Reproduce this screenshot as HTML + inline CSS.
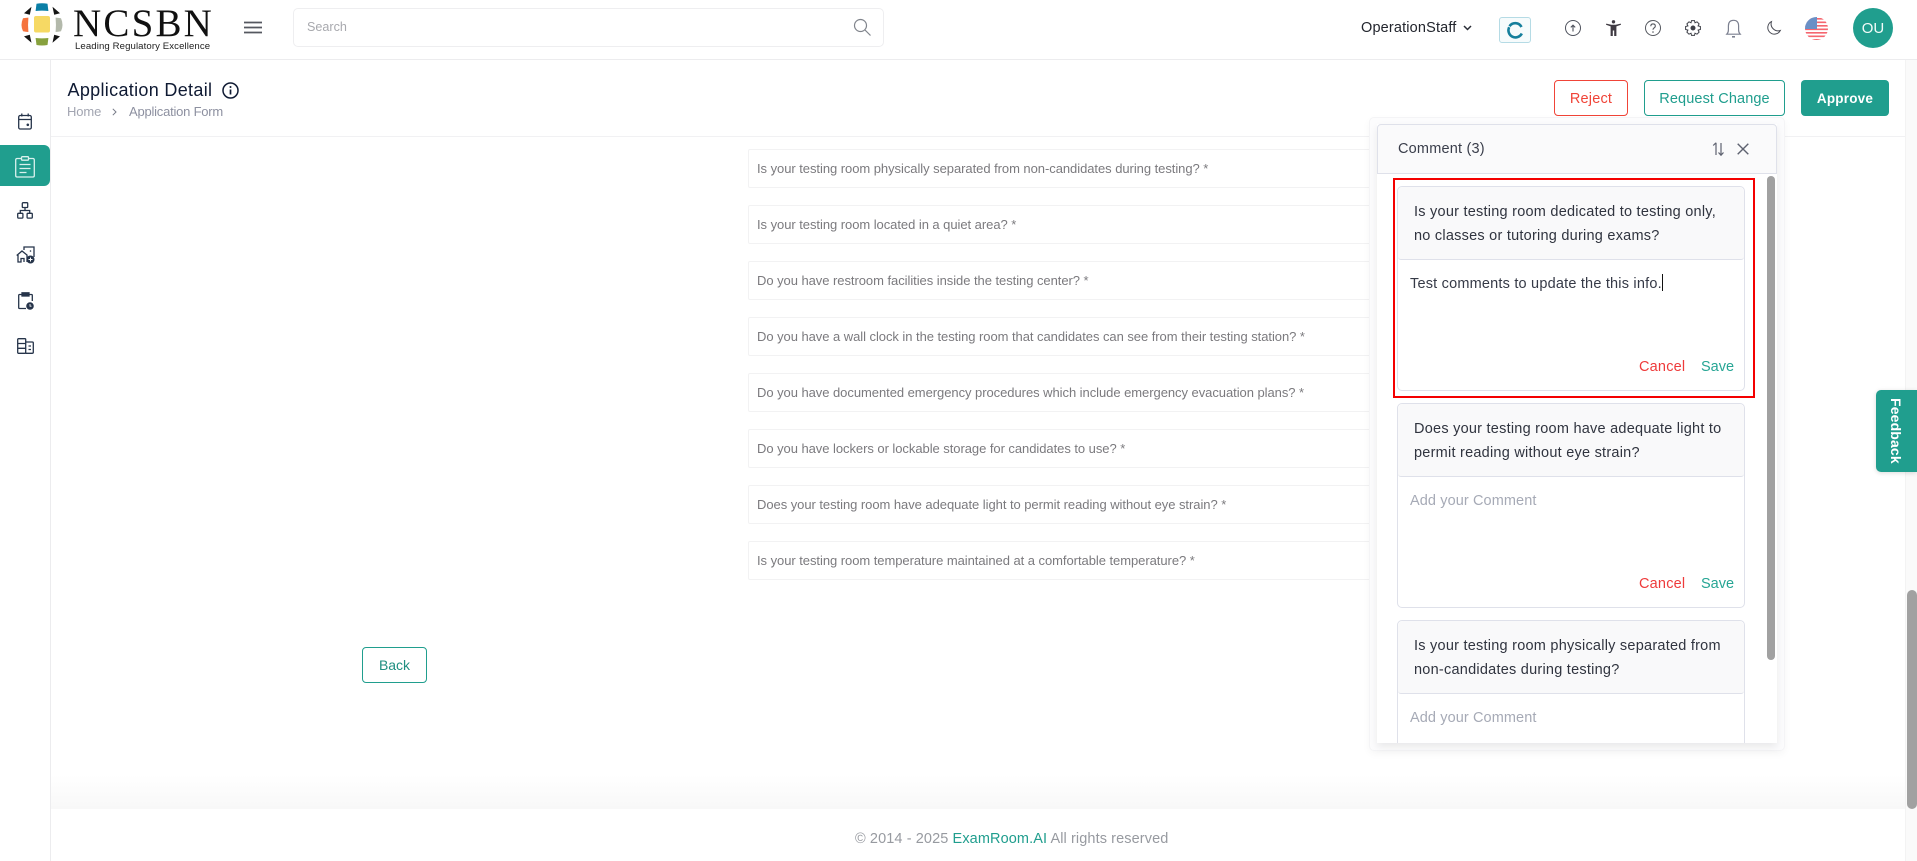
<!DOCTYPE html>
<html lang="en"><head><meta charset="utf-8"><title>Application Detail</title>
<style>
*{box-sizing:border-box}
html,body{margin:0;padding:0;width:1917px;height:861px;overflow:hidden;background:#fff;font-family:"Liberation Sans",sans-serif;color:#2f3442}
.a{position:absolute}
.t{position:absolute;white-space:nowrap;line-height:20px}
.q{position:absolute;left:748px;width:700px;height:39px;border:1px solid #f2f2f3;border-radius:2px;padding-left:8px;line-height:37px;font-size:13px;letter-spacing:-.05px;color:#7b7a7e;white-space:nowrap}
.card{position:absolute;left:1397px;width:348px;background:#fff;border:1px solid #dfe1ea;border-radius:5px}
.ch{position:absolute;left:0;top:0;right:0;height:73px;background:#f9f9fa;border-bottom:1px solid #dfe1ea;border-radius:5px 5px 3px 3px}
.cq{position:absolute;left:16px;white-space:nowrap;font-size:14.5px;line-height:24px;color:#30343f;letter-spacing:.24px}
.ph{position:absolute;left:12px;white-space:nowrap;font-size:14.5px;line-height:20px;color:#a6aab6;letter-spacing:.1px}
.cn{position:absolute;white-space:nowrap;font-size:14.5px;line-height:20px;color:#ee3b3b;letter-spacing:.2px}
.sv{position:absolute;white-space:nowrap;font-size:14.5px;line-height:20px;color:#26a594;letter-spacing:0}
.btn{position:absolute;top:80px;height:36px;border-radius:4px;text-align:center;line-height:36px;font-size:14.5px;letter-spacing:.2px}
svg{position:absolute;display:block;overflow:visible}
</style></head><body>

<!-- main scrollbar track -->
<div class="a" style="left:1905px;top:60px;width:12px;height:801px;background:#fafafa;border-left:1px solid #f3f3f3"></div>
<div class="a" style="left:1907px;top:590px;width:10px;height:219px;background:#a1a1a1;border-radius:5px"></div>

<!-- header -->
<div class="a" style="left:0;top:0;width:1917px;height:60px;background:#fff;border-bottom:1px solid #ececee"></div>
<svg style="left:0;top:0" width="70" height="50" viewBox="0 0 70 50">
<path d="M36.500 3.800Q42 2.800 47.500 3.800L48.400 11Q42 10.200 35.600 11Z" fill="#0b7fa6"/>
<path d="M23 18.200Q26 17.800 28.400 17.600Q27.700 25 28.400 32Q25.600 31.800 23 31.200Q20 25 23 18.200Z" fill="#f5733d"/>
<rect x="34" y="16" width="16" height="16.500" rx="2" fill="#f6d964"/>
<path d="M55.600 17.600Q58 17.800 61 18.200Q64 25 61 31.200Q58 31.800 55.600 32Q56.300 25 55.600 17.600Z" fill="#b3b9ab"/>
<path d="M35.600 38Q42 38.800 48.400 38L47.500 45Q42 46 36.500 45Z" fill="#87a13e"/>
<path d="M31.500 6.800L24 13.200L29.800 14.800ZM52.500 6.800L60 13.200L54.200 14.800ZM31.500 42.800L24 36.400L29.800 34.800ZM52.500 42.800L60 36.400L54.200 34.800Z" fill="#151515"/>
</svg>
<div class="t" style="left:73px;top:3px;font:39px/42px 'Liberation Serif',serif;letter-spacing:2.2px;color:#111">NCSBN</div>
<div class="t" style="left:75px;top:38px;font-size:9.600px;line-height:18px;color:#222;letter-spacing:.1px">Leading Regulatory Excellence</div>
<svg style="left:244px;top:21px" width="18" height="13"><path d="M0 1.500H18M0 6.500H18M0 11.500H18" stroke="#555860" stroke-width="1.700"/></svg>
<div class="a" style="left:293px;top:8px;width:591px;height:39px;border:1px solid #eeeef0;border-radius:5px"></div>
<div class="t" style="left:307px;top:17px;font-size:12.600px;color:#a8a9ae">Search</div>
<svg style="left:853px;top:18px" width="18" height="18" viewBox="0 0 18 18" fill="none" stroke="#80848c" stroke-width="1.200"><circle cx="7.500" cy="7.500" r="6"/><path d="M12 12L17.500 17.500"/></svg>

<div class="t" style="left:1361px;top:18px;font-size:14.500px;color:#22252d;letter-spacing:.16px">OperationStaff</div>
<svg style="left:1463px;top:25px" width="9" height="6" fill="none" stroke="#2a2d36" stroke-width="1.500"><path d="M1 1L4.500 4.500L8 1"/></svg>
<div class="a" style="left:1499px;top:17px;width:32px;height:26px;border:1px solid #b5dbe5;border-radius:3px;background:#f6fbfc"></div>
<svg style="left:1507px;top:22px" width="17" height="17" viewBox="0 0 17 17" fill="none" stroke="#157f9c" stroke-width="2.600"><path d="M14.500 5A7 7 0 0 0 2.500 4.200"/><path d="M2.200 5.200A7 7 0 0 0 14.800 11.500"/></svg>

<!-- header icons -->
<svg style="left:1565px;top:20px" width="16" height="16" viewBox="0 0 16 16" fill="none" stroke="#4e525d" stroke-width="1"><circle cx="8" cy="8" r="7.500"/><path d="M8 11.500V5.200M5.800 7.400L8 5.200L10.200 7.400" stroke-width="1.100"/></svg>
<svg style="left:1606px;top:20px" width="15" height="16" viewBox="0 0 15 16"><circle cx="7.500" cy="1.800" r="1.700" fill="#3f3a42"/><path d="M.3 3.600L5.300 4.700H9.700L14.700 3.600L15 4.700L10.400 6.400V16H8.200V10.500H6.800V16H4.600V6.400L0 4.700Z" fill="#3f3a42"/></svg>
<svg style="left:1645px;top:20px" width="16" height="16" viewBox="0 0 16 16" fill="none" stroke="#55585f" stroke-width="1"><circle cx="8" cy="8" r="7.500"/><path d="M5.800 6.200Q5.800 3.900 8 3.900Q10.300 3.900 10.300 6Q10.300 7.300 9 8Q8 8.600 8 9.800" stroke-width="1.100"/><circle cx="8" cy="12" r=".8" fill="#55585f" stroke="none"/></svg>
<svg style="left:1685px;top:20px" width="16" height="16" viewBox="0 0 16 16" fill="none" stroke="#3e4048" stroke-width="1"><path d="M6.500 .600H9.500L10 2.800L12 1.800L14.100 3.900L13.100 5.900L15.400 6.500V9.500L13.100 10.100L14.100 12.100L12 14.200L10 13.200L9.500 15.400H6.500L6 13.200L4 14.200L1.900 12.100L2.900 10.100L.600 9.500V6.500L2.900 5.900L1.900 3.900L4 1.800L6 2.800Z"/><circle cx="8" cy="8" r="2" fill="#3e4048"/></svg>
<svg style="left:1726px;top:19px" width="15" height="19" viewBox="0 0 15 19" fill="none" stroke="#7c8090" stroke-width="1.200"><path d="M.8 15.200H14.200Q12.600 13.500 12.600 11V7Q12.600 1.300 7.500 1.300Q2.400 1.300 2.400 7V11Q2.400 13.500 .8 15.200Z"/><path d="M6 17.800H9" stroke-width="1.600"/></svg>
<svg style="left:1766px;top:21px" width="15" height="14" viewBox="0 0 15 14" fill="none" stroke="#4a4c55" stroke-width="1"><path d="M5.500 .6A6.600 6.600 0 1 0 14.300 9.500A7 7 0 0 1 5.500 .6Z"/></svg>
<svg style="left:1805px;top:17px" width="23" height="23" viewBox="0 0 23 23"><defs><clipPath id="fc"><circle cx="11.500" cy="11.500" r="11.500"/></clipPath></defs><g clip-path="url(#fc)"><rect width="23" height="23" fill="#fff"/><path d="M0 1.800H23M0 5.300H23M0 8.800H23M0 12.300H23M0 15.800H23M0 19.300H23M0 22.800H23" stroke="#f5666f" stroke-width="1.700"/><rect width="12" height="12" fill="#6a90c6"/></g></svg>
<div class="a" style="left:1853px;top:8px;width:40px;height:40px;border-radius:50%;background:#209e8e;color:#f3fbf9;text-align:center;line-height:42px;font-size:15px">OU</div>

<!-- sidebar -->
<div class="a" style="left:50px;top:60px;width:1px;height:801px;background:#ececee"></div>
<div class="a" style="left:0;top:145px;width:50px;height:41px;background:#209e8e;border-radius:0 6px 6px 0"></div>
<svg style="left:18px;top:113px" width="14" height="17" viewBox="0 0 14 17" fill="none" stroke="#26344a" stroke-width="1.300"><rect x=".7" y="2.500" width="12.600" height="13.500" rx="1.500"/><path d="M.7 6.500H13.300M3.800 .5V3.500M10.200 .5V3.500"/><circle cx="9.800" cy="11.800" r="1.300" fill="#26344a" stroke="none"/></svg>
<svg style="left:15px;top:156px" width="20" height="22" viewBox="0 0 20 22" fill="none" stroke="#d9f1ed" stroke-width="1.300"><path d="M6.500 2.500H2Q.7 2.500 .7 4V19.500Q.7 21 2 21H18Q19.300 21 19.300 19.500V4Q19.300 2.500 18 2.500H13.500"/><rect x="6.500" y=".7" width="7" height="3.500" rx=".8"/><path d="M4.500 8.500H15.500M4.500 12.500H15.500M4.500 16.500H11.500"/></svg>
<svg style="left:17px;top:202px" width="16" height="17" viewBox="0 0 16 17" fill="none" stroke="#26344a" stroke-width="1.300"><rect x="5.300" y=".7" width="5.400" height="4.800" rx=".8"/><rect x=".7" y="11.300" width="5.200" height="4.800" rx=".8"/><rect x="10.100" y="11.300" width="5.200" height="4.800" rx=".8"/><path d="M8 5.500V8.500M3.300 11.300V8.500H12.700V11.300"/></svg>
<svg style="left:16px;top:246px" width="19" height="18" viewBox="0 0 19 18" fill="none" stroke="#26344a" stroke-width="1.300"><path d="M.7 9.500L6 5L11 9V16M2 9V16H5V12.500H8V16"/><path d="M8 4V1H18V11"/><circle cx="14.500" cy="13.500" r="4" fill="#26344a" stroke="none"/><path d="M12.500 13.500H16.500M14.500 11.500V15.500" stroke="#fff" stroke-width="1"/><circle cx="14.500" cy="5" r=".8" fill="#26344a" stroke="none"/></svg>
<svg style="left:18px;top:292px" width="16" height="18" viewBox="0 0 16 18" fill="none" stroke="#26344a" stroke-width="1.300"><path d="M4 2.500H1.500Q.7 2.500 .7 3.500V15.500Q.7 16.500 1.500 16.500H8M11 2.500H13.500Q14.300 2.500 14.300 3.500V9"/><rect x="4" y=".8" width="7" height="3.200" fill="#26344a"/><circle cx="12" cy="14" r="3.800" fill="#26344a" stroke="none"/><path d="M12 12V14.200H13.500" stroke="#fff" stroke-width=".8"/></svg>
<svg style="left:17px;top:338px" width="17" height="16" viewBox="0 0 17 16" fill="none" stroke="#26344a" stroke-width="1.300"><rect x=".7" y=".7" width="8" height="14.600" rx=".8"/><path d="M.7 5.500H8.700M.7 10.300H8.700M8.700 4H15.300Q16.300 4 16.300 5V14.300Q16.300 15.300 15.300 15.300H8.700M11.500 8H14M11.500 11.500H14"/></svg>

<!-- page header -->
<div class="a" style="left:51px;top:136px;width:1854px;height:1px;background:#f1f1f3"></div>
<div class="t" style="left:67.500px;top:79px;font-size:18px;line-height:22px;color:#0f1a33;letter-spacing:.32px">Application Detail</div>
<svg style="left:222px;top:82px" width="17" height="17" viewBox="0 0 17 17" fill="none" stroke="#0f1a33" stroke-width="1.500"><circle cx="8.500" cy="8.500" r="7.500"/><path d="M8.500 7.500V12.500" stroke-width="1.700"/><circle cx="8.500" cy="5" r="1" fill="#0f1a33" stroke="none"/></svg>
<div class="t" style="left:67px;top:102px;font-size:13px;color:#a2a5b1;letter-spacing:-.1px">Home</div>
<svg style="left:112px;top:108px" width="5" height="8" fill="none" stroke="#777b88" stroke-width="1"><path d="M.8 .8L4 4L.8 7.200"/></svg>
<div class="t" style="left:129px;top:102px;font-size:13px;color:#8d90a0;letter-spacing:-.22px">Application Form</div>

<div class="btn" style="left:1554px;width:74px;border:1px solid #f04438;color:#f04438;line-height:37px">Reject</div>
<div class="btn" style="left:1644px;width:141px;border:1px solid #209e8e;color:#209e8e;line-height:37px;letter-spacing:.12px">Request Change</div>
<div class="btn" style="left:1801px;width:88px;background:#209e8e;color:#fff;font-weight:bold;line-height:38px;font-size:13.500px">Approve</div>

<!-- questions -->
<div class="q" style="top:149px">Is your testing room physically separated from non-candidates during testing? *</div>
<div class="q" style="top:205px">Is your testing room located in a quiet area? *</div>
<div class="q" style="top:261px">Do you have restroom facilities inside the testing center? *</div>
<div class="q" style="top:317px">Do you have a wall clock in the testing room that candidates can see from their testing station? *</div>
<div class="q" style="top:373px">Do you have documented emergency procedures which include emergency evacuation plans? *</div>
<div class="q" style="top:429px">Do you have lockers or lockable storage for candidates to use? *</div>
<div class="q" style="top:485px">Does your testing room have adequate light to permit reading without eye strain? *</div>
<div class="q" style="top:541px">Is your testing room temperature maintained at a comfortable temperature? *</div>

<div class="a" style="left:362px;top:647px;width:65px;height:36px;border:1px solid #209e8e;border-radius:4px;text-align:center;line-height:34px;font-size:14px;color:#1f8f81">Back</div>

<!-- footer -->
<div class="a" style="left:51px;top:775px;width:1854px;height:34px;background:linear-gradient(to bottom,#fff 0%,#f8f8f8 100%)"></div>
<div class="a" style="left:51px;top:809px;width:1854px;height:52px;background:#fff"></div>
<div class="t" style="left:855px;top:829px;font-size:14.500px;color:#979aa0;letter-spacing:.1px">© 2014 - 2025 <span style="color:#209e8e">ExamRoom.AI</span> All rights reserved</div>

<!-- comment panel -->
<div class="a" style="left:1369px;top:117px;width:416px;height:634px;background:#fcfcfd;border:1px solid #f4f4f6;border-radius:5px;box-shadow:0 3px 8px rgba(0,0,0,.04)"></div>
<div class="a" style="left:1377px;top:124px;width:400px;height:619px;background:#fff;overflow:hidden;box-shadow:0 4px 8px rgba(0,0,0,.08)">
  <div style="position:absolute;left:-1377px;top:-124px;width:1917px;height:861px">
    <div class="a" style="left:1377px;top:124px;width:400px;height:50px;background:#fafafb;border:1px solid #dfe1ea;border-radius:4px 4px 0 0"></div>
    <div class="t" style="left:1398px;top:139px;font-size:14.500px;color:#3a3e4b;letter-spacing:.2px">Comment (3)</div>
    <svg style="left:1712px;top:142px" width="13" height="14" viewBox="0 0 13 14" fill="none" stroke="#5e6270" stroke-width="1.200"><path d="M4 13V.8M1.200 3.500L4 .8M9 1V13M6.500 10.500L9 13.200L11.500 10.500"/></svg>
    <svg style="left:1737px;top:143px" width="12" height="12" fill="none" stroke="#5e6270" stroke-width="1.400"><path d="M.7 .7L11.300 11.300M11.300 .7L.7 11.300"/></svg>

    <div class="card" style="top:186px;height:205px">
      <div class="ch"></div>
      <div class="cq" style="top:13px">Is your testing room dedicated to testing only,<br>no classes or tutoring during exams?</div>
      <div class="ph" style="top:87px;color:#363a47;letter-spacing:.2px">Test comments to update the this info.<span style="display:inline-block;width:1px;height:17px;background:#111;vertical-align:-3px"></span></div>
      <div class="cn" style="left:241px;top:170px">Cancel</div>
      <div class="sv" style="left:303px;top:170px">Save</div>
    </div>
    <div class="a" style="left:1393px;top:178px;width:362px;height:220px;border:2px solid #f40000"></div>

    <div class="card" style="top:403px;height:205px">
      <div class="ch"></div>
      <div class="cq" style="top:13px">Does your testing room have adequate light to<br>permit reading without eye strain?</div>
      <div class="ph" style="top:87px">Add your Comment</div>
      <div class="cn" style="left:241px;top:170px">Cancel</div>
      <div class="sv" style="left:303px;top:170px">Save</div>
    </div>
    <div class="card" style="top:620px;height:205px">
      <div class="ch"></div>
      <div class="cq" style="top:13px">Is your testing room physically separated from<br>non-candidates during testing?</div>
      <div class="ph" style="top:87px">Add your Comment</div>
    </div>
    <div class="a" style="left:1767px;top:176px;width:8px;height:484px;background:#a1a1a1;border-radius:4px"></div>
  </div>
</div>

<!-- feedback -->
<div class="a" style="left:1876px;top:390px;width:41px;height:82px;background:#209e8e;border-radius:5px 0 0 5px;box-shadow:0 1px 5px rgba(0,0,0,.15)"></div>
<div class="t" style="left:1888px;top:398px;writing-mode:vertical-rl;font-size:14px;line-height:16px;font-weight:bold;color:#fff;letter-spacing:.15px">Feedback</div>
</body></html>
